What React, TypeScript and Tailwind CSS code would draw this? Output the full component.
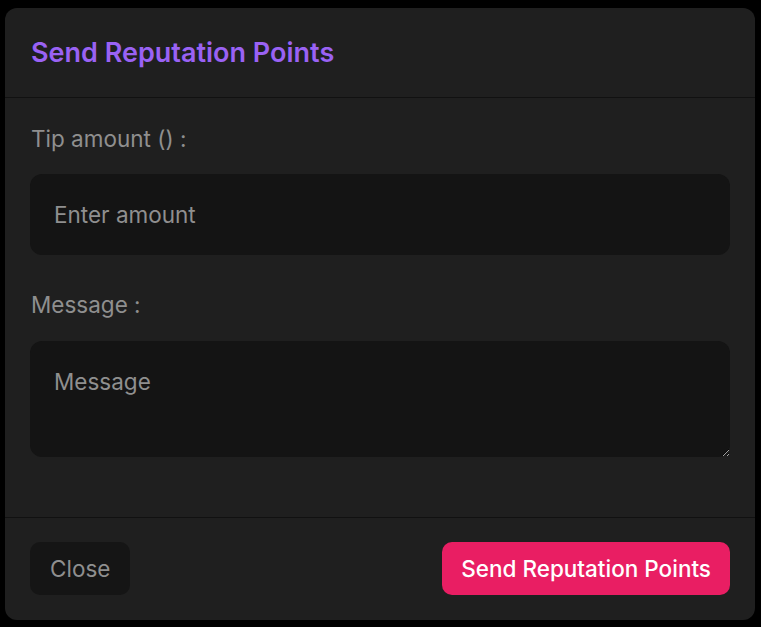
export default function App() {
  return (
    <div className="min-h-[627px] w-full bg-black p-[5px] pt-[8px]" style={{ fontFamily: "Inter, 'Noto Sans', sans-serif" }}>
      <div className="w-[750px] rounded-[12px] bg-[#1f1f1f] flex flex-col">
        <div className="px-[26px] h-[90px] flex items-center border-b border-[#111111]">
          <h2 className="text-[27px] font-semibold text-[#9a62f4] leading-[36px]">Send Reputation Points</h2>
        </div>
        <div className="px-[25px] pt-[27px] pb-[60px] border-b border-[#111111] flex flex-col">
          <label className="text-[22.5px] leading-[28px] text-[#8f8f8f] pl-[1px]">Tip amount () :</label>
          <input
            className="mt-[21px] h-[81px] w-full rounded-[12px] bg-[#141414] px-[24px] text-[22.5px] text-[#aaaaaa] placeholder-[#8f8f8f] outline-none"
            placeholder="Enter amount"
          />
          <label className="mt-[36px] text-[22.5px] leading-[28px] text-[#8f8f8f] pl-[1px]">Message :</label>
          <textarea
            className="mt-[22px] h-[116px] w-full rounded-[12px] bg-[#141414] px-[24px] py-[26px] text-[22.5px] leading-[30px] text-[#aaaaaa] placeholder-[#8f8f8f] outline-none"
            placeholder="Message"
          />
        </div>
        <div className="px-[25px] pt-[24px] pb-[25px] flex items-center justify-between">
          <button className="h-[53px] px-[20px] rounded-[10px] bg-[#151515] text-[22.5px] text-[#8f8f8f]">Close</button>
          <button className="h-[53px] px-[19px] rounded-[10px] bg-[#e91e63] text-[22.5px] font-medium text-white">Send Reputation Points</button>
        </div>
      </div>
    </div>
  );
}
